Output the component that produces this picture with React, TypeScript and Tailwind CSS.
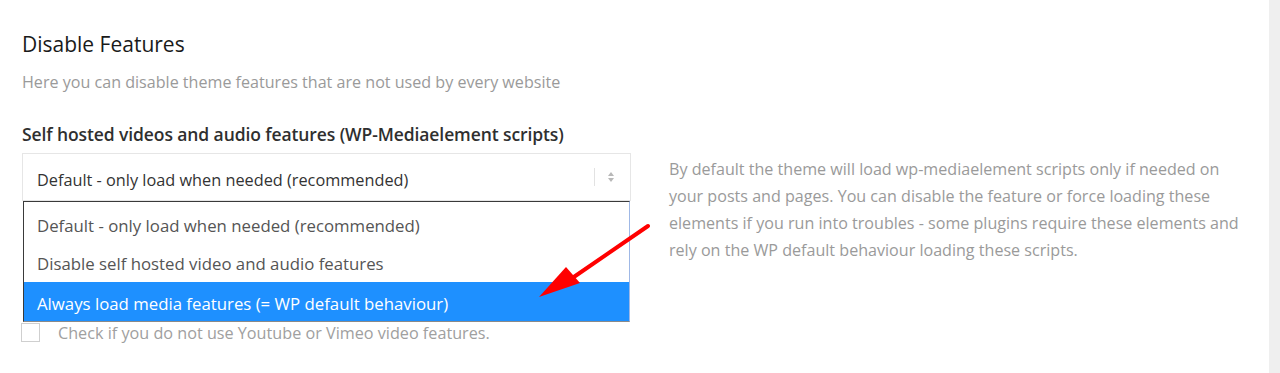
import React from "react";

export default function App() {
  const font = { fontFamily: '"Open Sans", "Noto Sans", sans-serif' };
  return (
    <div className="relative flex h-[373px] w-full overflow-hidden bg-white" style={font}>
      <div className="flex-1 pl-[22px] pt-[29px]">
        <h2 className="text-[21px] leading-[30px] text-[#1a1a1a]">Disable Features</h2>
        <p className="mt-[11px] text-[16.1px] leading-[24px] text-[#9a9a9a]">
          Here you can disable theme features that are not used by every website
        </p>
        <div className="mt-[28px] text-[17.5px] leading-[24px] font-semibold text-[#2f2f2f] tracking-[-0.1px]">
          Self hosted videos and audio features (WP-Mediaelement scripts)
        </div>
        <div className="mt-[7px] flex gap-[38px]">
          <div className="relative w-[609px]">
            <div className="flex h-[48px] items-center border border-[#e6e6e6] pl-[14px] pr-[12px] text-[16.3px] text-[#333]">
              <span className="flex-1 pt-[7px]">Default - only load when needed (recommended)</span>
              <span className="h-[18px] w-px bg-[#e2e2e2]" />
              <svg width="10" height="14" viewBox="0 0 10 14" className="ml-[11px] mr-[2px]">
                <path d="M5 2 L8 6 L2 6 Z" fill="#b8b8b8" />
                <path d="M5 12 L8 8 L2 8 Z" fill="#b8b8b8" />
              </svg>
            </div>
            <div className="absolute left-[1px] top-[48px] z-10 w-[607px] border-l border-t border-l-[#3a3a3a] border-t-[#3a3a3a] border-r border-r-[#9fb8e6] border-b border-b-[#8a8a8a] bg-white text-[16.8px]">
              <div className="flex h-[40px] items-center pl-[13px] pt-[7px] text-[#555]">Default - only load when needed (recommended)</div>
              <div className="flex h-[40px] items-center pl-[13px] pt-[4px] text-[#555]">Disable self hosted video and audio features</div>
              <div className="flex h-[39px] items-center bg-[#1e90ff] pl-[13px] pt-[5px] text-white">Always load media features (= WP default behaviour)</div>
            </div>
            <div className="mt-[121px] flex items-center">
              <span className="-ml-[1px] h-[19px] w-[19px] border border-[#cfcfcf] bg-white" />
              <span className="ml-[18px] pt-[1px] text-[16.2px] leading-[20px] text-[#a0a0a0]">
                Check if you do not use Youtube or Vimeo video features.
              </span>
            </div>
          </div>
          <p className="mt-[3px] w-[578px] text-[16.1px] leading-[27px] text-[#9a9a9a]">
            By default the theme will load wp-mediaelement scripts only if needed on your posts and pages. You can disable the feature or force loading these elements if you run into troubles - some plugins require these elements and rely on the WP default behaviour loading these scripts.
          </p>
        </div>
      </div>
      <div className="w-[11px] bg-[#efefef]" />
      <svg className="pointer-events-none absolute left-0 top-0 z-20" width="1280" height="373">
        <line x1="648" y1="226" x2="568" y2="281" stroke="#ff0000" strokeWidth="4" strokeLinecap="round" />
        <path d="M539 297 L566 267 L580 283 Z" fill="#ff0000" />
      </svg>
    </div>
  );
}
